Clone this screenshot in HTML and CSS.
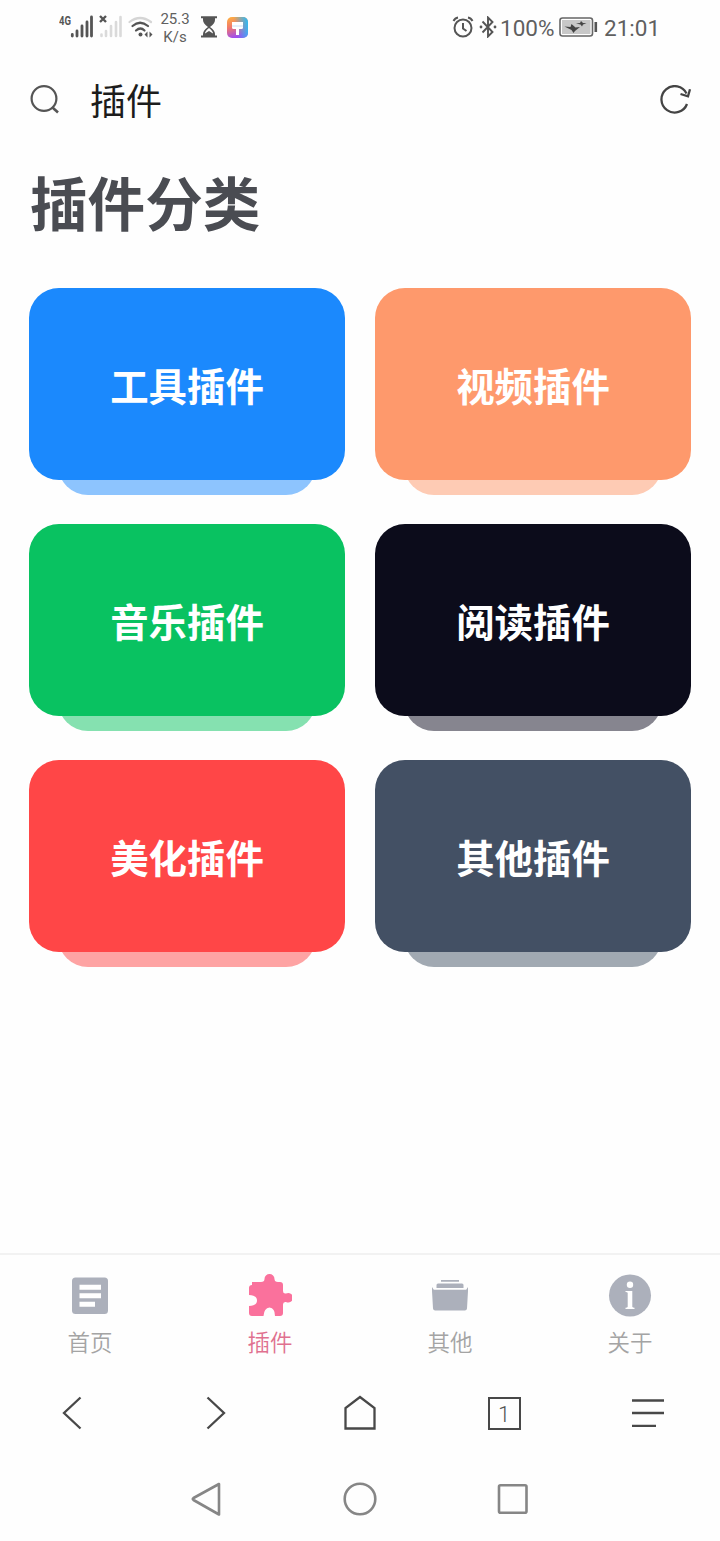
FILE: index.html
```html
<!DOCTYPE html>
<html lang="zh-CN">
<head>
  <meta charset="UTF-8" />
  <meta name="viewport" content="width=device-width, initial-scale=1.0" />
  <title>插件</title>
  <link rel="stylesheet" href="styles.css">
</head>
<body>
  <!-- Status bar -->
  <div class="status">
    <div class="status-left">
      <svg class="signal" width="36" height="28" viewBox="0 0 36 28">
        <text class="net" x="0" y="12" textLength="12" lengthAdjust="spacingAndGlyphs">4G</text>
        <path d="M13.300 21.500v1.500M18 18v5M23 13v10M28 9v14M32.500 4v19" fill="none" stroke="#555" stroke-width="2.800" stroke-linecap="round"/>
      </svg>
      <svg class="nosim" width="24" height="28" viewBox="0 0 24 28">
        <path d="M2.500 21.500v1.500M7 18v5M12 13v10M17 9v14M21.500 4v19" fill="none" stroke="#dadada" stroke-width="2.600" stroke-linecap="round"/>
        <path d="M1 3l6 6M7 3l-6 6" stroke="#555" stroke-width="2.400"/>
      </svg>
      <svg class="wifi" width="26" height="24" viewBox="0 0 26 24">
        <g fill="none" stroke-linecap="round" stroke-width="2.200">
          <path d="M1.500 7Q12-1 23 7" stroke="#d5d5d5"/>
          <path d="M4.500 11Q12 4.500 20 11M8 15.500Q12.500 11.500 16.500 15.500" stroke="#555"/>
        </g>
        <circle cx="12.500" cy="19.500" r="2" fill="#555"/>
        <path d="M19.500 16.500v6l-3-3zM21.500 16.500v6l3-3z" fill="#555"/>
      </svg>
      <div class="speed"><span>25.3</span><span>K/s</span></div>
      <svg class="hourglass" width="18" height="22" viewBox="0 0 18 22">
        <path d="M1 1.200h16M1 20.500h16" stroke="#555" stroke-width="2"/>
        <path d="M3 1h12v3q0 3.500-5 7 5 3.500 5 7v2H3v-2q0-3.500 5-7-5-3.500-5-7z" fill="#555"/>
        <path d="M9 12q4 3 4 5.500L9 15l-4 2.500Q5 15 9 12z" fill="#fff"/>
      </svg>
      <svg class="theme" width="21" height="21" viewBox="0 0 21 21">
        <defs>
          <linearGradient id="warm" x1="0" y1="0" x2="0.300" y2="1">
            <stop offset="0" stop-color="#ffb43c"/>
            <stop offset=".5" stop-color="#f0776d"/>
            <stop offset="1" stop-color="#a04df0"/>
          </linearGradient>
          <linearGradient id="cool" x1="0" y1=".6" x2="1" y2=".4">
            <stop offset=".4" stop-color="#35b8ee" stop-opacity="0"/>
            <stop offset="1" stop-color="#35b8ee"/>
          </linearGradient>
        </defs>
        <rect width="21" height="21" rx="5" fill="url(#warm)"/>
        <rect width="21" height="21" rx="5" fill="url(#cool)"/>
        <path d="M5 5h11v5.500q0 1.500-1.500 1.500H12v6H9v-6H6.500Q5 12 5 10.500z" fill="#fff"/>
        <path d="M5 9h11" stroke="#c8e0f4" stroke-width="1"/>
      </svg>
    </div>
    <div class="status-right">
      <svg width="22" height="22" viewBox="0 0 22 22" fill="none" stroke="#555" stroke-width="2">
        <circle cx="11" cy="12" r="8.500"/>
        <path d="M11 7v5.500l3.500 2.500M1.500 5Q3 2 6 1.500M20.500 5Q19 2 16 1.500"/>
      </svg>
      <svg class="bluetooth" width="18" height="22" viewBox="0 0 18 22">
        <path d="M3.500 5.500l10 10.500L9 20.500v-19L13.500 6l-10 10.500" fill="none" stroke="#555" stroke-width="1.900"/>
        <circle cx="2" cy="11" r="1.400" fill="#555"/>
        <circle cx="16" cy="11" r="1.400" fill="#555"/>
      </svg>
      <span class="percent">100%</span>
      <svg class="battery" width="39" height="20" viewBox="0 0 39 20">
        <rect x="1" y="1" width="32.500" height="18" rx="2.500" fill="#fff" stroke="#666" stroke-width="1.600"/>
        <rect x="3" y="3" width="28.500" height="14" fill="#c8c8c8"/>
        <path d="M5.500 9.500l6 .5 1-3 4 3.500 4.500-.5-5 4-1.500 2-2-3zM17 6.500l4-.5 1-2 2 2 3.500.3-3.500 1.200-1 2-1.500-2z" fill="#444"/>
        <path d="M36.800 5v10" stroke="#555" stroke-width="2.600"/>
      </svg>
      <span class="clock">21:01</span>
    </div>
  </div>

  <!-- Search bar -->
  <header class="topbar">
    <svg width="30" height="30" viewBox="0 0 30 30" fill="none" stroke="#555" stroke-width="2.200">
      <circle cx="14" cy="13.500" r="12.400"/>
      <path d="M22.500 22.500l5.500 5" stroke-width="2.600"/>
    </svg>
    <span class="keyword">插件</span>
    <svg class="refresh" width="32" height="30" viewBox="0 0 32 30" fill="none" stroke="#444" stroke-width="2.300">
      <path d="M27 19A13.200 13.200 0 1 1 26.500 8.500"/>
      <path d="M20.500 9l7.500 2.300 2-7"/>
    </svg>
  </header>

  <main>
    <h1>插件分类</h1>
    <div class="grid">
      <div class="card blue"><span>工具插件</span></div>
      <div class="card orange"><span>视频插件</span></div>
      <div class="card green"><span>音乐插件</span></div>
      <div class="card black"><span>阅读插件</span></div>
      <div class="card red"><span>美化插件</span></div>
      <div class="card slate"><span>其他插件</span></div>
    </div>
  </main>

  <!-- App tabs -->
  <nav class="tabs">
    <div class="tab">
      <svg width="44" height="44" viewBox="0 0 44 44">
        <rect x="4" y="3.500" width="36" height="36.500" rx="3.500" fill="#acb0bb"/>
        <path d="M11.500 13.300h21.500M11.500 21.700h21.500M11.500 30.200h15.500" stroke="#fff" stroke-width="5"/>
      </svg>
      <span>首页</span>
    </div>
    <div class="tab active">
      <svg width="44" height="44" viewBox="0 0 44 44">
        <path d="M4 8h9q3.500 0 3.500-3a5 5 0 0 1 10 0q0 3 3.500 3h2q3 0 3 3v6q0 3 3 2.500a4.800 4.800 0 1 1 0 8.500q-3-.5-3 2.500v8.500q0 3-3 3h-5q0-8-5.500-8.500-5.500.5-6 8.500H4q-3 0-3-3v-7q8-.5 8-5.500t-8-5.500v-7q0-3 3-3z" fill="#fa719c"/>
      </svg>
      <span>插件</span>
    </div>
    <div class="tab">
      <svg width="44" height="44" viewBox="0 0 44 44" fill="#acb0bb">
        <path d="M13 6h18v1.800H13zM10 9.500h24q1.500 0 1.500 1.500v3h-27v-3q0-1.500 1.500-1.500z"/>
        <path d="M4 13l1.800 2.800h32.400L40 13v4l-1 17.500q-.2 2-2.200 2H7.200q-2 0-2.200-2L4 17z"/>
      </svg>
      <span>其他</span>
    </div>
    <div class="tab">
      <svg width="44" height="44" viewBox="0 0 44 44">
        <circle cx="22" cy="21.500" r="21" fill="#acb0bb"/>
        <circle cx="22" cy="10.800" r="3.200" fill="#fff"/>
        <path d="M17.500 17h6.800v15.800q.2 1 2.200 1v1.200h-9v-1.200q2 0 2.200-1V19q0-1-2.200-1z" fill="#fff"/>
      </svg>
      <span>关于</span>
    </div>
  </nav>

  <!-- Browser toolbar -->
  <nav class="toolbar">
    <svg width="36" height="36" viewBox="0 0 36 36"><path d="M26.500 2.500L10 18l16.500 15.500"/></svg>
    <svg width="36" height="36" viewBox="0 0 36 36"><path d="M9.500 2.500L26 18 9.500 33.500"/></svg>
    <svg width="36" height="36" viewBox="0 0 36 36"><path d="M3.500 33.500V13L18 2l14.500 11v20.500z"/></svg>
    <div class="pages"><span>1</span></div>
    <svg width="36" height="36" viewBox="0 0 36 36"><path d="M2 5.500h32M2 18h32M2 30.800h24"/></svg>
  </nav>

  <!-- System navigation -->
  <nav class="system">
    <svg width="36" height="36" viewBox="0 0 36 36"><path d="M31 3L5.500 17Q4 18 5.500 19L31 33.500z"/></svg>
    <svg width="36" height="36" viewBox="0 0 36 36"><circle cx="18" cy="18" r="15.300"/></svg>
    <svg width="36" height="36" viewBox="0 0 36 36"><rect x="3" y="4.300" width="27.500" height="27.500" rx="1.500"/></svg>
  </nav>
</body>
</html>
```
FILE: styles.css
```css
* {
  box-sizing: border-box;
}

body {
  margin: 0;
  height: 1541px;
  overflow: hidden;
  background: #fefefe;
  font-family: Roboto, "Noto Sans CJK SC", sans-serif;
  display: flex;
  flex-direction: column;
}

svg {
  display: block;
  flex-shrink: 0;
}

.status {
  height: 54px;
  padding: 0 60px 0 59px;
  display: flex;
  align-items: center;
  justify-content: space-between;
  color: #606060;
}

.status-left,
.status-right {
  display: flex;
  align-items: center;
}

.net {
  font-size: 12px;
  font-weight: bold;
  fill: #555;
}

.nosim {
  margin-left: 4px;
}

.wifi {
  margin-left: 5px;
}

.speed {
  width: 36px;
  margin-left: 3px;
  padding-top: 2px;
  display: flex;
  flex-direction: column;
  align-items: center;
  font-size: 15px;
  line-height: 18px;
}

.hourglass {
  margin-left: 7px;
}

.theme {
  margin-left: 9px;
}

.bluetooth {
  margin-left: 5px;
}

.percent,
.clock {
  font-size: 22.5px;
  line-height: 28px;
  padding-top: 2px;
}

.percent {
  width: 56px;
  margin-left: 3px;
}

.battery {
  margin-left: 3px;
}

.clock {
  width: 56px;
  margin-left: 6px;
}

.topbar {
  height: 90px;
  padding: 2px 28px 0 30px;
  display: flex;
  align-items: center;
}

.keyword {
  margin-left: 30px;
  padding-top: 6px;
  font-size: 36px;
  line-height: 50px;
  color: #1c1c1c;
}

.refresh {
  margin-left: auto;
}

main {
  flex: 1;
  padding: 0 29px;
}

h1 {
  margin: 23px 0 41px 1px;
  font-size: 57.6px;
  line-height: 80px;
  color: #4a4c52;
}

.grid {
  display: grid;
  grid-template-columns: 1fr 1fr;
  gap: 44px 30px;
}

.card {
  position: relative;
  height: 192px;
  border-radius: 30px;
  background: var(--color);
  display: flex;
  align-items: center;
  justify-content: center;
  font-size: 38.4px;
  font-weight: bold;
  color: #fff;
}

/* second sheet peeking out below the card */
.card::after {
  content: "";
  position: absolute;
  left: 29px;
  right: 29px;
  bottom: -15px;
  height: 60px;
  border-radius: 30px;
  background: var(--under);
  clip-path: inset(45px 0 0 0);
}

.blue {
  --color: #1b89fd;
  --under: #8dc4fe;
}

.orange {
  --color: #fe996c;
  --under: #fecbb4;
}

.green {
  --color: #09c261;
  --under: #85e1b0;
}

.black {
  --color: #0c0c1b;
  --under: #86858f;
}

.red {
  --color: #ff4647;
  --under: #fea3a3;
}

.slate {
  --color: #435064;
  --under: #a1a9b2;
}

.tabs {
  height: 119px;
  border-top: 2px solid #f2f2f2;
  padding-top: 19px;
  display: flex;
}

.tab {
  flex: 1;
  display: flex;
  flex-direction: column;
  align-items: center;
  font-size: 22.5px;
  font-weight: 350;
  line-height: 32px;
  color: #a4a4a4;
}

.tab span {
  margin-top: 9px;
}

.tab.active {
  color: #e0708f;
}

.toolbar {
  height: 82px;
  display: grid;
  grid-template-columns: repeat(5, 1fr);
  place-items: center;
}

.toolbar svg {
  fill: none;
  stroke: #484848;
  stroke-width: 2.3;
}

.pages {
  width: 33px;
  height: 33px;
  border: 2.5px solid #484848;
  display: flex;
  align-items: center;
  justify-content: center;
  padding-top: 2px;
  font-size: 22px;
  font-weight: 300;
  color: #555;
}

.system {
  height: 87px;
  padding: 3px 129px 0;
  display: grid;
  grid-template-columns: repeat(3, 1fr);
  place-items: center;
}

.system svg {
  fill: none;
  stroke: #868686;
  stroke-width: 2.6;
  stroke-linejoin: round;
}
```
